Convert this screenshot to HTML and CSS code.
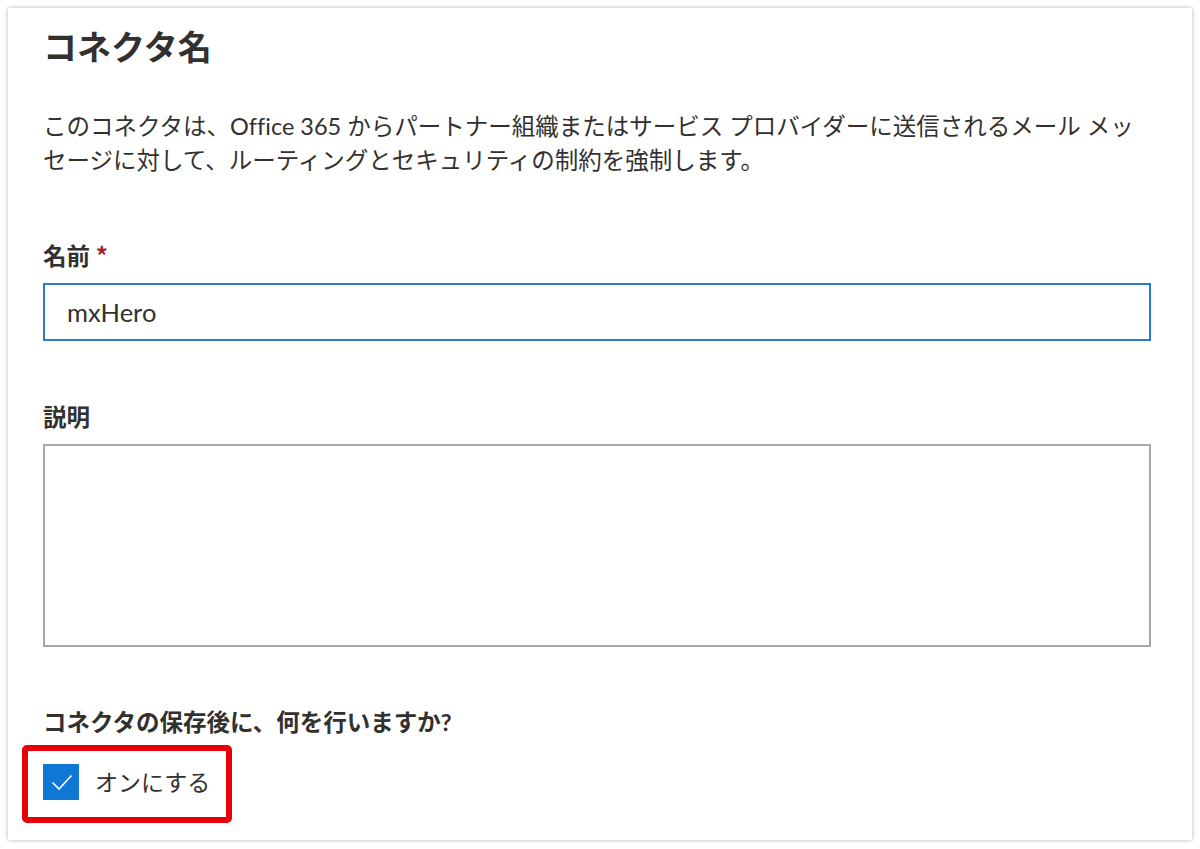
FILE: index.html
```html
<!DOCTYPE html>
<html lang="ja">
<head>
    <meta charset="utf-8">
    <title>コネクタ名</title>
    <link rel="stylesheet" href="styles.css">
</head>
<body>
    <div class="card">
        <h1 class="title">コネクタ名</h1>
        <p class="intro">このコネクタは、Office 365 からパートナー組織またはサービス プロバイダーに送信されるメール メッ<br>セージに対して、ルーティングとセキュリティの制約を強制します。</p>

        <label class="field-label" for="name">名前 <span class="required">*</span></label>
        <input class="text-input" type="text" id="name" value="mxHero">

        <label class="field-label label-desc" for="desc">説明</label>
        <textarea class="text-area" id="desc"></textarea>

        <div class="field-label label-after">コネクタの保存後に、何を行いますか?</div>
        <div class="highlight">
            <label class="check-row">
                <span class="check-box">
                    <svg width="36" height="36" viewBox="0 0 36 36">
                        <path d="M9.5 18.5 L16 25 L28.5 11.5" fill="none" stroke="#fff" stroke-width="1.6"/>
                    </svg>
                </span>
                <span class="check-text">オンにする</span>
            </label>
        </div>
    </div>
</body>
</html>
```

FILE: styles.css
```css
body {
    margin: 0;
    background: #fff;
    font-family: "Lato", "Noto Sans CJK JP", sans-serif;
    font-variant-ligatures: none;
    color: #323130;
}
.card {
    margin: 8px;
    width: 1184px;
    box-sizing: border-box;
    padding: 17px 41px 17px 35px;
    background: #fff;
    box-shadow: 0 0 4px rgba(0, 0, 0, 0.3);
}
.title {
    margin: 0;
    font-size: 34px;
    line-height: 44px;
    font-weight: bold;
}
.intro {
    margin: 40px 0 0;
    font-size: 23.5px;
    line-height: 34px;
}
.field-label {
    display: block;
    height: 30px;
    margin-top: 64px;
    font-size: 23.5px;
    line-height: 30px;
    font-weight: bold;
}
.required {
    color: #a4262c;
    font-family: "Noto Sans CJK JP", sans-serif;
    font-size: 24px;
    line-height: 10px;
}
.label-desc {
    margin-top: 61px;
}
.label-after {
    margin-top: 60px;
}
.text-input {
    display: block;
    box-sizing: border-box;
    width: 100%;
    height: 58px;
    margin-top: 12px;
    padding: 0 22px;
    border: 2px solid #2b7bd4;
    font-family: "Lato", "Noto Sans CJK JP", sans-serif;
    font-size: 25.5px;
    color: #323130;
    outline: none;
}
.text-area {
    display: block;
    box-sizing: border-box;
    width: 100%;
    height: 203px;
    margin-top: 12px;
    border: 2px solid #a8a8a8;
    resize: none;
    outline: none;
}
.highlight {
    display: inline-block;
    margin: 8px 0 0 -21px;
    padding: 13px 16px 17px 15px;
    border: 6px solid #e8000b;
    border-radius: 5px;
}
.check-row {
    display: flex;
    align-items: center;
    gap: 16px;
}
.check-box {
    display: block;
    width: 36px;
    height: 36px;
    background: #0f78d4;
}
.check-box svg {
    display: block;
}
.check-text {
    font-size: 23px;
    line-height: 36px;
}
```
